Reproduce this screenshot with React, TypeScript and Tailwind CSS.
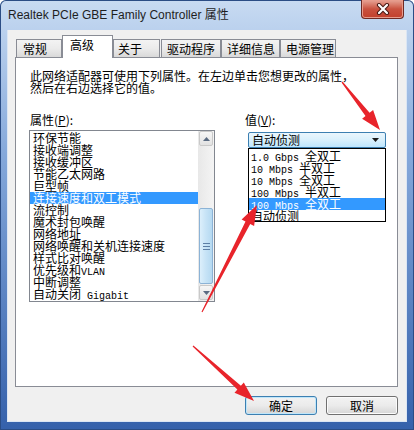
import React from 'react';

const propertyItems = [
  '环保节能',
  '接收端调整',
  '接收缓冲区',
  '节能乙太网路',
  '巨型帧',
  '连接速度和双工模式',
  '流控制',
  '魔术封包唤醒',
  '网络地址',
  '网络唤醒和关机连接速度',
  '样式比对唤醒',
  '优先级和VLAN',
  '中断调整',
  '自动关闭 Gigabit',
];

const speedOptions = ['1.0 Gbps 全双工', '10 Mbps 半双工', '10 Mbps 全双工', '100 Mbps 半双工', '100 Mbps 全双工', '自动侦测'];

const tabs = [
  { label: '常规', cls: 'w-[46px] pl-[6px]' },
  { label: '高级', cls: 'w-[51px] pl-[7px]', active: true },
  { label: '关于', cls: 'w-[47px] pl-[4px]' },
  { label: '驱动程序', cls: 'w-[60px] pl-[5px] ml-[1px]' },
  { label: '详细信息', cls: 'w-[59px] pl-[5px]' },
  { label: '电源管理', cls: 'w-[56px] pl-[5px]' },
];

// latin runs look like SimSun's half-width glyphs, so render them mono
function Mixed({ text }: { text: string }) {
  const parts = text.split(/([\x20-\x7e]+)/).filter(Boolean);
  return (
    <>
      {parts.map((p, i) =>
        /^[\x20-\x7e]+$/.test(p) ? (
          <span key={i} className="whitespace-pre font-['Liberation_Mono',monospace] text-[10px]">
            {p}
          </span>
        ) : (
          <span key={i}>{p}</span>
        )
      )}
    </>
  );
}

function arrow(x1: number, y1: number, x2: number, y2: number) {
  const len = Math.hypot(x2 - x1, y2 - y1);
  const dx = (x2 - x1) / len;
  const dy = (y2 - y1) / len;
  const nx = -dy;
  const ny = dx;
  const bx = x2 - dx * 20;
  const by = y2 - dy * 20;
  const pts = [
    [x1 + nx * 0.6, y1 + ny * 0.6],
    [bx + nx * 2.6, by + ny * 2.6],
    [bx + nx * 7, by + ny * 7],
    [x2, y2],
    [bx - nx * 7, by - ny * 7],
    [bx - nx * 2.6, by - ny * 2.6],
    [x1 - nx * 0.6, y1 - ny * 0.6],
  ];
  return pts.map((p) => `${p[0].toFixed(1)},${p[1].toFixed(1)}`).join(' ');
}

function ScrollButton({ up }: { up?: boolean }) {
  return (
    <div className="flex h-[15px] w-full items-center justify-center rounded-[2px] border border-[#c9c9c9] bg-linear-to-b from-[#f6f6f6] to-[#e2e2e2]">
      <svg width="7" height="4" viewBox="0 0 7 4">
        <path d={up ? 'M0 4 L3.5 0 L7 4 Z' : 'M0 0 L3.5 4 L7 0 Z'} fill="#5a6b82" />
      </svg>
    </div>
  );
}

export default function App() {
  return (
    <div className="relative h-[430px] w-[414px] overflow-hidden rounded-t-[6px] bg-linear-to-b from-[#c8dbf2] via-[#86a9db] via-35% to-[#3561ab] font-['Noto_Sans_CJK_SC',sans-serif] text-[12px] text-black shadow-[inset_0_0_0_1px_#2b4d85]">
      {/* title bar */}
      <div className="flex h-[30px] items-start justify-between">
        <div className="pl-[8px] pt-[7px] font-['Liberation_Sans','Noto_Sans_CJK_SC',sans-serif] text-[12px] leading-[16px] text-[#1e1e1e]">
          Realtek PCIe GBE Family Controller 属性
        </div>
        <div className="mr-[10px] flex h-[19px] w-[43px] items-center justify-center rounded-b-[4px] border border-t-0 border-[#6e2a24] bg-linear-to-b from-[#e6a497] via-[#c9513f] via-50% to-[#c2402c] shadow-[inset_0_0_0_1px_#e79c8d]">
          <svg width="14" height="12" viewBox="0 0 14 12">
            <path d="M3 2 L11 10 M11 2 L3 10" stroke="#4a1a14" strokeWidth="4.2" strokeLinecap="round" />
            <path d="M3 2 L11 10 M11 2 L3 10" stroke="#ffffff" strokeWidth="2.2" strokeLinecap="round" />
          </svg>
        </div>
      </div>

      {/* client area */}
      <div className="mx-[7px] flex h-[392px] flex-col border-x border-b border-[#dbe6f4] bg-[#f0f0f0] pl-[7px] pr-[8px] pt-[5px]">
        <div className="relative z-10 flex h-[22px] items-end pl-px">
          {tabs.map((t) =>
            t.active ? (
              <div
                key={t.label}
                className={`-mb-px h-[23px] border border-b-0 border-[#898c95] bg-white pt-[1px] leading-[16px] ${t.cls}`}
              >
                {t.label}
              </div>
            ) : (
              <div
                key={t.label}
                className={`h-[18px] border border-b-0 border-[#898c95] bg-linear-to-b from-[#f3f3f3] via-[#ebebeb] via-50% to-[#d9d9d9] pt-[2px] leading-[14px] ${t.cls}`}
              >
                {t.label}
              </div>
            )
          )}
        </div>

        <div className="h-[330px] border border-[#898c95] bg-white pl-[13px] pt-[12px]">
          <div className="whitespace-nowrap pl-px leading-[12px]">
            此网络适配器可使用下列属性。在左边单击您想更改的属性，
            <br />
            然后在右边选择它的值。
          </div>

          <div className="mt-[20px] flex">
            <div className="w-[186px]">
              <div className="h-[16px] pl-px leading-[12px]">
                属性(<span className="underline">P</span>):
              </div>
              <div className="flex h-[172px] border border-[#828790] bg-white">
                <div className="flex-1 pt-px">
                  {propertyItems.map((p) => (
                    <div
                      key={p}
                      className={`h-[12px] whitespace-nowrap pl-[3px] leading-[12px] ${
                        p === '连接速度和双工模式' ? 'bg-[#3399ff] text-white' : ''
                      }`}
                    >
                      <Mixed text={p} />
                    </div>
                  ))}
                </div>
                <div className="flex w-[16px] flex-col bg-linear-to-r from-[#e8e8e8] to-[#f4f4f4] px-px">
                  <ScrollButton up />
                  <div className="h-[62px]" />
                  <div className="flex h-[76px] flex-col items-center justify-center gap-[2px] rounded-[2px] border border-[#8cb3d6] bg-linear-to-r from-[#dceffb] via-[#c6e3f6] to-[#b5d9f1]">
                    <div className="h-px w-[7px] bg-[#5d7fa5]" />
                    <div className="h-px w-[7px] bg-[#5d7fa5]" />
                    <div className="h-px w-[7px] bg-[#5d7fa5]" />
                  </div>
                  <div className="h-px" />
                  <ScrollButton />
                </div>
              </div>
            </div>

            <div className="relative ml-[30px] w-[142px]">
              <div className="h-[18px] leading-[12px]">
                值(<span className="underline">V</span>):
              </div>
              <div className="ml-[3px] flex h-[16px] w-[138px] items-center justify-between rounded-[2px] border border-[#3c7fb1] bg-linear-to-b from-[#eaf6fd] via-[#d9f0fc] via-50% to-[#bee6fd] pl-[3px] pr-[6px] leading-[14px]">
                <span>自动侦测</span>
                <svg width="7" height="4" viewBox="0 0 7 4">
                  <path d="M0 0 L3.5 4 L7 0 Z" fill="#1a1a1a" />
                </svg>
              </div>
              <div className="absolute left-[3px] top-[34px] h-[74px] w-[138px] border border-black bg-white pt-px">
                {speedOptions.map((s) => (
                  <div
                    key={s}
                    className={`h-[12px] whitespace-nowrap pl-[2px] leading-[12px] ${
                      s === '100 Mbps 全双工' ? 'bg-[#3399ff] text-white' : ''
                    }`}
                  >
                    <Mixed text={s} />
                  </div>
                ))}
              </div>
            </div>
          </div>
        </div>

        <div className="mt-[9px] flex justify-end gap-[9px]">
          <button className="h-[19px] w-[72px] rounded-[3px] border border-[#3c7fb1] bg-linear-to-b from-[#f2f2f2] via-[#ebebeb] via-50% to-[#d6d6d6] leading-[15px] shadow-[inset_0_0_0_1px_#bfe6fa]">
            确定
          </button>
          <button className="h-[19px] w-[72px] rounded-[3px] border border-[#707070] bg-linear-to-b from-[#f3f3f3] via-[#ebebeb] via-50% to-[#d6d6d6] leading-[15px] shadow-[inset_0_0_0_1px_#fbfbfb]">
            取消
          </button>
        </div>
      </div>

      {/* red annotation arrows */}
      <svg className="pointer-events-none absolute left-0 top-0" width="414" height="430">
        <polygon points={arrow(342, 82, 380, 130)} fill="#e8242b" />
        <polygon points={arrow(202, 312, 257, 205)} fill="#e8242b" />
        <polygon points={arrow(193, 346, 254, 401)} fill="#e8242b" />
      </svg>
    </div>
  );
}
